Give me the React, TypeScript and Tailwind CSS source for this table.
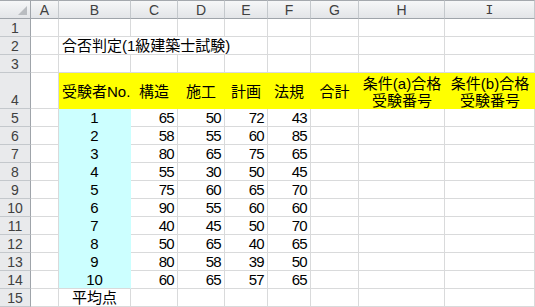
import type { ReactNode } from 'react'

const COLS = ['A', 'B', 'C', 'D', 'E', 'F', 'G', 'H', 'I']

const SCORES = [
  [65, 50, 72, 43],
  [58, 55, 60, 85],
  [80, 65, 75, 65],
  [55, 30, 50, 45],
  [75, 60, 65, 70],
  [90, 55, 60, 60],
  [40, 45, 50, 70],
  [50, 65, 40, 65],
  [80, 58, 39, 50],
  [60, 65, 57, 65],
]

const FONT = "font-['Liberation_Sans','Noto_Sans_CJK_JP',sans-serif]"

// plain worksheet cell; text sits on the bottom edge like Excel's default
function Cell({ children, className = '' }: { children?: ReactNode; className?: string }) {
  return (
    <div className={`border-r border-b border-[#d9dadb] bg-white flex text-[15px] leading-[16px] text-black ${className}`}>
      {children}
    </div>
  )
}

function RowHead({ n }: { n: number }) {
  return (
    <div className="bg-[#e9eaec] border-r border-b border-r-[#9fa4aa] border-b-[#c4c8cc] flex items-end justify-center text-[14px] leading-[16px] text-[#404040]">
      {n}
    </div>
  )
}

function Num({ v }: { v?: number }) {
  return <Cell className="items-end justify-end pr-[3px] text-[14px] tracking-[-0.7px]">{v}</Cell>
}

const yellow = '!bg-[#ffff00] !border-[#ffff00]'

export default function App() {
  return (
    <div
      className={`w-[535px] h-[307px] overflow-hidden bg-white grid ${FONT} grid-cols-[31px_28px_72px_47px_47px_43px_43px_48px_86px_1fr] grid-rows-[19px_18px_18px_18px_36px_repeat(11,18px)]`}
    >
      {/* column headers */}
      <div className="relative border-t border-t-[#a4a8ad] bg-gradient-to-b from-[#f6f7f8] to-[#e3e5e8] border-r border-b border-r-[#9fa4aa] border-b-[#9fa4aa]">
        <svg className="absolute right-[3px] bottom-[3px]" width="9" height="9" viewBox="0 0 9 9">
          <polygon points="9,0 9,9 0,9" fill="#b9bcc0" />
        </svg>
      </div>
      {COLS.map((c) => (
        <div
          key={c}
          className={`border-t border-t-[#a4a8ad] bg-gradient-to-b from-[#f6f7f8] to-[#e3e5e8] border-r border-b border-r-[#c4c8cc] border-b-[#9fa4aa] flex items-center justify-center leading-[16px] text-[#404040] ${
            c === 'I' ? "font-['DejaVu_Sans_Mono',monospace] text-[13px]" : 'text-[14px]'
          }`}
        >
          {c}
        </div>
      ))}

      {/* row 1 */}
      <RowHead n={1} />
      {COLS.map((c) => (
        <Cell key={c} />
      ))}

      {/* row 2: title spills over B..E */}
      <RowHead n={2} />
      <Cell />
      <Cell className="col-span-4 items-end pl-[3px] whitespace-nowrap">合否判定(1級建築士試験)</Cell>
      <Cell />
      <Cell />
      <Cell />
      <Cell />

      {/* row 3 */}
      <RowHead n={3} />
      {COLS.map((c) => (
        <Cell key={c} />
      ))}

      {/* row 4: yellow header band */}
      <RowHead n={4} />
      <Cell />
      <Cell className={`${yellow} items-center pt-[3px] pl-[3px] whitespace-nowrap`}>受験者No.</Cell>
      {['構造', '施工', '計画', '法規', '合計'].map((t) => (
        <Cell key={t} className={`${yellow} items-center justify-center pt-[3px]`}>
          {t}
        </Cell>
      ))}
      {['条件(a)合格', '条件(b)合格'].map((t) => (
        <div
          key={t}
          className="bg-[#ffff00] flex flex-col items-center justify-center text-[15px] leading-[17px] text-black pt-[1px]"
        >
          <span>{t}</span>
          <span>受験番号</span>
        </div>
      ))}

      {/* rows 5..14 */}
      {SCORES.map((s, i) => (
        <ScoreRow key={i} n={i + 5} id={i + 1} s={s} last={i === SCORES.length - 1} />
      ))}

      {/* row 15 */}
      <RowHead n={15} />
      <Cell />
      <Cell className="items-end justify-center">平均点</Cell>
      {COLS.slice(2).map((c) => (
        <Cell key={c} />
      ))}
    </div>
  )
}

function ScoreRow({ n, id, s, last }: { n: number; id: number; s: number[]; last: boolean }) {
  return (
    <>
      <RowHead n={n} />
      <Cell />
      <Cell
        className={`!bg-[#ccffff] !border-r-[#ccffff] items-end justify-center text-[14px] ${last ? '' : '!border-b-[#ccffff]'}`}
      >
        {id}
      </Cell>
      {s.map((v, j) => (
        <Num key={j} v={v} />
      ))}
      <Cell />
      <Cell />
      <Cell />
    </>
  )
}
